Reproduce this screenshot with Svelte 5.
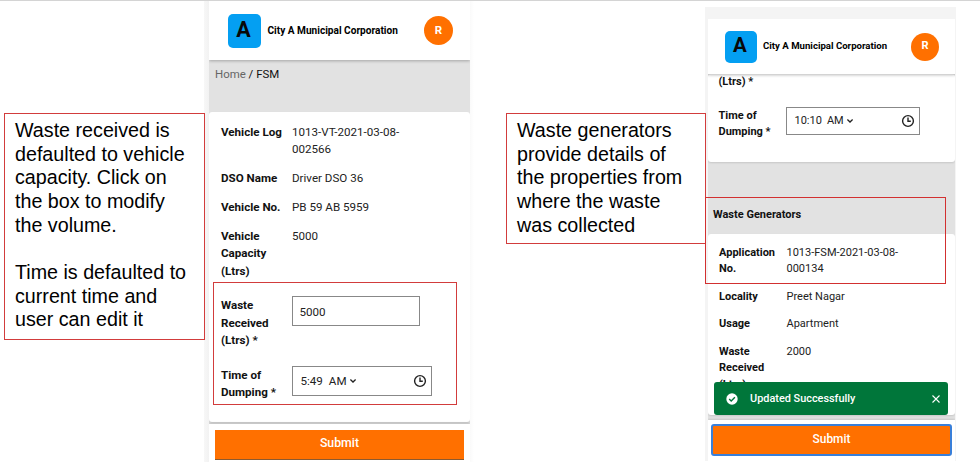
<script>
  const vehicle = [
    ['Vehicle Log', '1013-VT-2021-03-08-002566'],
    ['DSO Name', 'Driver DSO 36'],
    ['Vehicle No.', 'PB 59 AB 5959'],
    ['Vehicle Capacity (Ltrs)', '5000']
  ];
  const generator = [
    ['Application No.', '1013-FSM-2021-03-08-000134'],
    ['Locality', 'Preet Nagar'],
    ['Usage', 'Apartment'],
    ['Waste Received (Ltrs)', '2000']
  ];
</script>

{#snippet header()}
  <header class="bar">
    <div class="logo">A</div>
    <div class="org">City A Municipal Corporation</div>
    <div class="avatar">R</div>
  </header>
{/snippet}

{#snippet details(rows)}
  <dl class="rows">
    {#each rows as [label, value]}
      <div class="row"><dt>{label}</dt><dd>{value}</dd></div>
    {/each}
  </dl>
{/snippet}

{#snippet time(hour)}
  <div class="field time">
    <span class="hour">{hour}</span>
    <span class="ampm">AM</span>
    <svg class="chev" viewBox="0 0 8 6"><path d="M1.4 1.500 4 4 6.600 1.500" /></svg>
    <svg class="clock" viewBox="0 0 14 14"><circle cx="7" cy="7" r="5.400" /><path d="M7 3.600V7.300H9.800" /></svg>
  </div>
{/snippet}

<main class="slide">
  <aside class="note first">
    <p>Waste received is<br />defaulted to vehicle<br />capacity. Click on<br />the box to modify<br />the volume.</p>
    <p>Time is defaulted to<br />current time and<br />user can edit it</p>
  </aside>

  <div class="frame left">
    <section class="phone">
      {@render header()}
      <nav class="crumbs"><span>Home</span> / FSM</nav>
      <div class="card">
        {@render details(vehicle)}
        <div class="form">
          <div class="row"><div class="label">Waste Received (Ltrs) *</div><div class="field amount">5000</div></div>
          <div class="row"><div class="label">Time of Dumping *</div>{@render time('5:49')}</div>
        </div>
      </div>
      <footer class="foot"><div class="submit">Submit</div></footer>
    </section>
    <div class="mark"></div>
  </div>

  <aside class="note second">
    <p>Waste generators<br />provide details of<br />the properties from<br />where the waste<br />was collected</p>
  </aside>

  <div class="frame right">
    <section class="phone">
      {@render header()}
      <div class="card top">
        <div class="label clipped">(Ltrs) *</div>
        <div class="row"><div class="label">Time of Dumping *</div>{@render time('10:10')}</div>
      </div>
      <h2>Waste Generators</h2>
      <div class="card generators">{@render details(generator)}</div>
      <footer class="foot"><div class="submit">Submit</div></footer>
    </section>
    <div class="toast">
      <svg class="ok" viewBox="0 0 12 12"><circle cx="6" cy="6" r="5.700" /><path d="M3.200 6.100 5.200 8 8.900 4.200" /></svg>
      <span>Updated Successfully</span>
      <svg class="x" viewBox="0 0 10 10"><path d="M1.500 1.500 8.500 8.500M8.500 1.500 1.500 8.500" /></svg>
    </div>
    <div class="mark"></div>
  </div>
</main>

<style>
  :global(body) { margin: 0; background: #fff; }
  .slide, .slide :global(*) { box-sizing: border-box; }
  .slide {
    width: 980px; height: 462px; overflow: hidden;
    display: flex; align-items: flex-start;
    border-top: 1px solid #d4d4d4; background: #fff; color: #111;
    font-family: Roboto, sans-serif;
  }
  .note {
    flex: none; border: 1px solid #d23c3c; padding: 5px 0 0 10px;
    font: 19.7px/23.7px "Liberation Sans", Arial, sans-serif;
    color: #000; white-space: nowrap; position: relative; z-index: 2;
  }
  .note p { margin: 0 0 23.5px; }
  .first { width: 201px; height: 227px; margin: 112px 0 0 4px; }
  .second { width: 200px; height: 131px; margin: 112px 0 0 32px; }

  .frame { position: relative; flex: none; }
  .left { width: 270px; height: 461px; margin-left: -1px; padding: 0 0 0 5px; background: linear-gradient(90deg, #f7f7f7 0, #f2f2f2 5px, #f2f2f2 265px, #fafafa 266px, #fff 270px);
    --fs: 11.600px; --lh: 17.4px; --label: 71px; }
  .right { width: 251px; height: 454px; margin-top: 6px; padding: 12px 1px 0 3px; background: #f4f4f4; margin-left: -1px;
    --fs: 11px; --lh: 16.5px; --label: 67.500px; }
  .phone { display: flex; flex-direction: column; height: 100%; background: #e2e2e2; overflow: hidden; font-size: var(--fs); line-height: var(--lh); }
  .left .phone { width: 261px; }
  .right .phone { width: 247px; }

  .bar { flex: none; display: flex; align-items: center; background: #fff; box-shadow: 0 1px 3px rgba(0,0,0,.28); position: relative; z-index: 1; }
  .logo { display: flex; align-items: center; justify-content: center; background: #049ff2; color: #080808; font-weight: 700; padding-bottom: 2px; }
  .org { font-weight: 700; white-space: nowrap; color: #000; }
  .avatar { margin-left: auto; border-radius: 50%; background: #ff7000; color: #fff; font-weight: 700; display: flex; align-items: center; justify-content: center; }
  .left .bar { height: 59px; padding: 0 17px 0 19px; }
  .left .logo { width: 33px; height: 34px; border-radius: 5px; font-size: 21.500px; padding-right: 2px; }
  .left .org { margin-left: 6.500px; font-size: 10.1px; }
  .left .avatar { width: 29px; height: 29px; font-size: 11.500px; }
  .right .bar { height: 55px; padding: 0 16px 0 17px; }
  .right .logo { width: 32px; height: 32px; border-radius: 5px; font-size: 20.500px; padding-right: 2px; }
  .right .org { margin-left: 6px; font-size: 9.620px; }
  .right .avatar { width: 28px; height: 28px; font-size: 11px; }

  .crumbs { height: 52px; padding: 6px 0 0 6px; color: #111; flex: none; font-size: 11.450px; }
  .crumbs span { color: #666; }
  .card { background: #fff; border-radius: 3px; box-shadow: 0 1px 2px rgba(0,0,0,.12); flex: none; }
  .left .card { height: 310px; padding: 11.600px 0 0 12px; }
  .rows { margin: 0; display: flex; flex-direction: column; }
  .row { display: flex; align-items: flex-start; }
  dt, .label { font-weight: 700; width: var(--label); flex: none; color: #111; }
  dd { margin: 0; color: #222; }
  .left .rows { gap: 11.600px; }
  .left dd { width: 125px; }
  .right .rows { gap: 11px; }
  .right dd { width: 125px; }
  .form { display: flex; flex-direction: column; gap: 17.400px; margin-top: 17px; }
  .field { border: 1px solid #888; display: flex; align-items: center; color: #222; background: #fff; padding-top: 1px; }
  .left .field { height: 30px; margin-top: -1px; }
  .left .amount { width: 128px; padding: 2px 0 0 6.500px; }
  .time { padding: 1px 4px 0 7.500px; }
  .left .time { width: 140px; }
  .left .hour { margin-right: 6px; }
  .right .hour { margin-right: 5px; }
  svg { fill: none; stroke: #222; flex: none; }
  .chev { width: 8px; height: 6px; margin-left: 2px; stroke-width: 1.3; }
  .clock { width: 14px; height: 14px; margin-left: auto; stroke-width: 1.4; }
  .foot { background: #fff; margin-top: auto; flex: none; box-shadow: 0 -1px 2px rgba(0,0,0,.12); }
  .submit { background: #ff7000; color: #fff; display: flex; align-items: center; justify-content: center; font-weight: 500; border-bottom: 1px solid #8b5a30; }
  .left .foot { height: 38px; margin-top: 2px; padding: 6px 6px 0; }
  .left .submit { height: 30px; font-size: 12.300px; padding-bottom: 1px; }
  .mark { position: absolute; border: 1px solid #d23c3c; z-index: 3; }
  .left .mark { left: 9px; top: 281px; width: 244px; height: 123px; }

  .card.top { height: 88px; padding: 0 0 0 10.500px; }
  .clipped { margin-bottom: 17px; }
  .right .time { width: 134px; height: 28px; margin-top: -1px; }
  h2 { margin: 0; height: 72px; padding: 44.500px 0 0 5px; font-size: 11px; line-height: 16.500px; flex: none; }
  .generators { height: 181px; padding: 10.800px 0 0 11px; }
  .right .foot { height: 41px; padding: 4px 3px 0; }
  .right .submit { height: 32px; font-size: 11.900px; border: 2px solid #397fd9; border-radius: 3px; padding-bottom: 1px; }
  .right .mark { left: 0; top: 190px; width: 241px; height: 87px; border-color: #d23030; }
  .toast {
    position: absolute; left: 9px; top: 375px; width: 234px; height: 33px; z-index: 2;
    background: #00763a; border-radius: 3px; color: #fff; font-size: 10.900px; font-weight: 500;
    display: flex; align-items: center; padding: 0 7px 0 12px;
  }
  .ok { width: 12px; height: 12px; margin-right: 12px; }
  .ok circle { fill: #fff; stroke: none; }
  .ok path { stroke: #00763a; stroke-width: 1.4; }
  .x { width: 10px; height: 10px; margin-left: auto; }
  .x path { stroke: #fff; stroke-width: 1.1; }
</style>
